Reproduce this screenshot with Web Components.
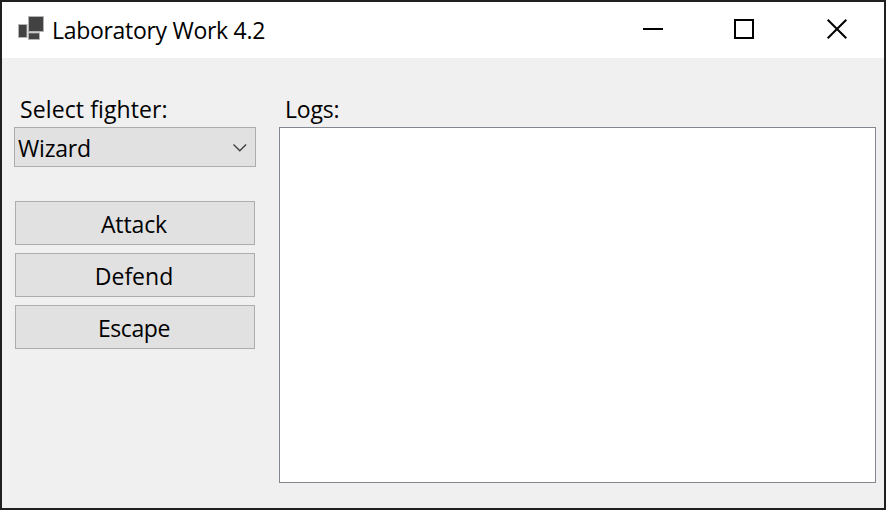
<!DOCTYPE html>
<html lang="en">
<head>
<meta charset="utf-8">
<title>Laboratory Work 4.2</title>
<style>
body { margin: 0; font: 23px/32px "Open Sans", "Noto Sans", sans-serif; color: #000; }
</style>
</head>
<body>
<app-window>
  <title-bar slot="title">Laboratory Work 4.2</title-bar>
  <field-group slot="side">
    <text-label slot="label" style="letter-spacing:.1px">Select fighter:</text-label>
    <combo-box>Wizard</combo-box>
    <button-stack>
      <push-button style="letter-spacing:-.1px">Attack</push-button>
      <push-button>Defend</push-button>
      <push-button style="letter-spacing:-.4px">Escape</push-button>
    </button-stack>
  </field-group>
  <field-group slot="main">
    <text-label slot="label" style="letter-spacing:-.2px">Logs:</text-label>
    <log-box></log-box>
  </field-group>
</app-window>
<script>
const define = (name, markup) => customElements.define(name, class extends HTMLElement {
  constructor() {
    super();
    this.attachShadow({ mode: 'open' }).innerHTML =
      '<style>:host,*{box-sizing:border-box}</style>' + markup;
  }
});
define('app-window', `<style>
  :host{display:flex;flex-direction:column;width:886px;height:510px;border:2px solid #202020;background:#f0f0f0}
  main{flex:1;display:grid;grid-template-columns:242px 597px;column-gap:23px;padding:35px 8px 25px 12px}
</style><slot name="title"></slot><main><slot name="side"></slot><slot name="main"></slot></main>`);
define('title-bar', `<style>
  :host{display:flex;height:56px;background:#fff;align-items:flex-start}
  .app{margin:13px 0 0 15px;width:28px;height:26px;flex:none}
  span{margin:12px 0 0 7px;flex:1;white-space:nowrap;letter-spacing:-.3px}
  .ctl{flex:none;margin-top:15px;width:205px;height:24px;margin-right:36px}
</style>
<svg class="app" viewBox="17 15 28 26"><g fill="#424242" stroke="#b4b4b4" stroke-width="1">
<rect x="28.5" y="16.5" width="15" height="15"/><rect x="18.5" y="24.5" width="8.5" height="13"/><rect x="28.5" y="32.9" width="11" height="6.6"/></g></svg>
<span><slot></slot></span>
<svg class="ctl" viewBox="643 17 205 24" fill="none" stroke="#000" stroke-width="2">
<path d="M643 29H663M735 20H753V38H735Z"/><path d="M827.7 19.7L846.3 38.3M846.3 19.7L827.7 38.3"/></svg>`);
define('field-group', `<style>
  :host{display:flex;flex-direction:column}
  header{height:34px;padding-left:6px;flex:none}
</style><header><slot name="label"></slot></header><slot></slot>`);
define('text-label', `<style>:host{display:block;white-space:nowrap}</style><slot></slot>`);
define('combo-box', `<style>
  :host{display:flex;justify-content:space-between;height:40px;flex:none;border:1px solid #adadad;background:#e1e1e1;padding:4px 7px 0 3px;letter-spacing:-.2px}
  svg{width:16px;height:10px;margin-top:11px}
</style><span><slot></slot></span>
<svg viewBox="0 0 16 10"><path d="M1.5 1.5L7.8 7.7L14.1 1.5" fill="none" stroke="#404040" stroke-width="1.4"/></svg>`);
define('button-stack', `<style>
  :host{display:flex;flex-direction:column;gap:8px;padding:34px 1px 0}
</style><slot></slot>`);
define('push-button', `<style>
  :host{display:block;height:44px;border:1px solid #adadad;background:#e1e1e1;padding:6px 2px 0 0;text-align:center}
</style><slot></slot>`);
define('log-box', `<style>:host{display:block;flex:1;background:#fff;border:1px solid #828790}</style>`);
</script>
</body>
</html>
